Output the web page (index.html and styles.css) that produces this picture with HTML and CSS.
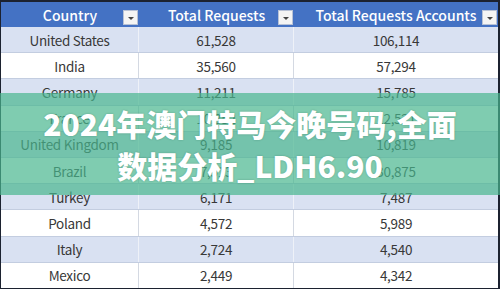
FILE: index.html
```html
<!DOCTYPE html>
<html lang="zh">
<head>
<meta charset="utf-8">
<link rel="stylesheet" href="styles.css">
</head>
<body>
<div class="sheet">
  <div class="table">
    <div class="row head">
      <div class="cell">Country<span class="dd"></span></div>
      <div class="cell">Total Requests<span class="dd"></span></div>
      <div class="cell">Total Requests Accounts<span class="dd"></span></div>
    </div>
    <div class="row band"><div class="cell">United States</div><div class="cell">61,528</div><div class="cell">106,114</div></div>
    <div class="row"><div class="cell">India</div><div class="cell">35,560</div><div class="cell">57,294</div></div>
    <div class="row band"><div class="cell">Germany</div><div class="cell">11,211</div><div class="cell">15,785</div></div>
    <div class="row"><div class="cell">France</div><div class="cell">10,352</div><div class="cell">12,521</div></div>
    <div class="row band"><div class="cell">United Kingdom</div><div class="cell">9,185</div><div class="cell">10,819</div></div>
    <div class="row"><div class="cell">Brazil</div><div class="cell">7,513</div><div class="cell">30,875</div></div>
    <div class="row band"><div class="cell">Turkey</div><div class="cell">6,171</div><div class="cell">7,487</div></div>
    <div class="row"><div class="cell">Poland</div><div class="cell">4,572</div><div class="cell">5,989</div></div>
    <div class="row band"><div class="cell">Italy</div><div class="cell">2,724</div><div class="cell">4,540</div></div>
    <div class="row"><div class="cell">Mexico</div><div class="cell">2,449</div><div class="cell">4,342</div></div>
  </div>
  <div class="banner">
    <h1 class="title">2024年澳门特马今晚号码,全面<br>数据分析_LDH6.90</h1>
  </div>
</div>
</body>
</html>
```

FILE: styles.css
```css
* { box-sizing: border-box; margin: 0; padding: 0; }
html, body { width: 500px; height: 289px; overflow: hidden; }
body { background: #1c2230; }
.sheet {
  position: relative;
  width: 500px;
  height: 289px;
  padding: 2px 2px 1px 1px;
  overflow: hidden;
}
.table {
  display: grid;
  grid-template-rows: 25px repeat(10, 26.2px);
  background: #ffffff;
  height: 286px;
  overflow: hidden;
  font-family: "Noto Sans CJK SC", "Noto Sans", sans-serif;
  font-size: 13.5px;
  letter-spacing: -0.3px;
  color: #383838;
}
.row {
  display: grid;
  grid-template-columns: 138px 155px 1fr;
  border-bottom: 1px solid #c3cde0;
}
.row.band { background: #d9e1f2; }
.cell {
  position: relative;
  display: flex;
  align-items: center;
  justify-content: center;
  border-right: 1px solid #d4d9e2;
}
.row.band .cell { border-right-color: #eef1f8; }
.cell:last-child { border-right: none; }
.head {
  background: #4472c4;
  color: #fff;
  font-weight: 500;
  font-size: 14px;
  letter-spacing: 0;
  border-bottom: none;
}
.head .cell { border-right: none; }
.dd {
  position: absolute;
  right: 1px;
  top: 8px;
  width: 15px;
  height: 15px;
  background: #f4f4f4;
  border: 1px solid #b8c2d6;
}
.dd::after {
  content: "";
  position: absolute;
  left: 4px;
  top: 6px;
  border-left: 3px solid transparent;
  border-right: 3px solid transparent;
  border-top: 3px solid #444;
}
.banner {
  position: absolute;
  left: 0;
  top: 93px;
  width: 500px;
  height: 102px;
  background: rgba(72, 182, 142, 0.7);
  display: flex;
  align-items: center;
  justify-content: center;
}
.title {
  font-family: "Noto Sans CJK SC", sans-serif;
  font-weight: 900;
  font-size: 30px;
  line-height: 42px;
  color: #fff;
  text-align: center;
  text-shadow: 0 0 2px rgba(0, 60, 40, 0.3);
}
```
